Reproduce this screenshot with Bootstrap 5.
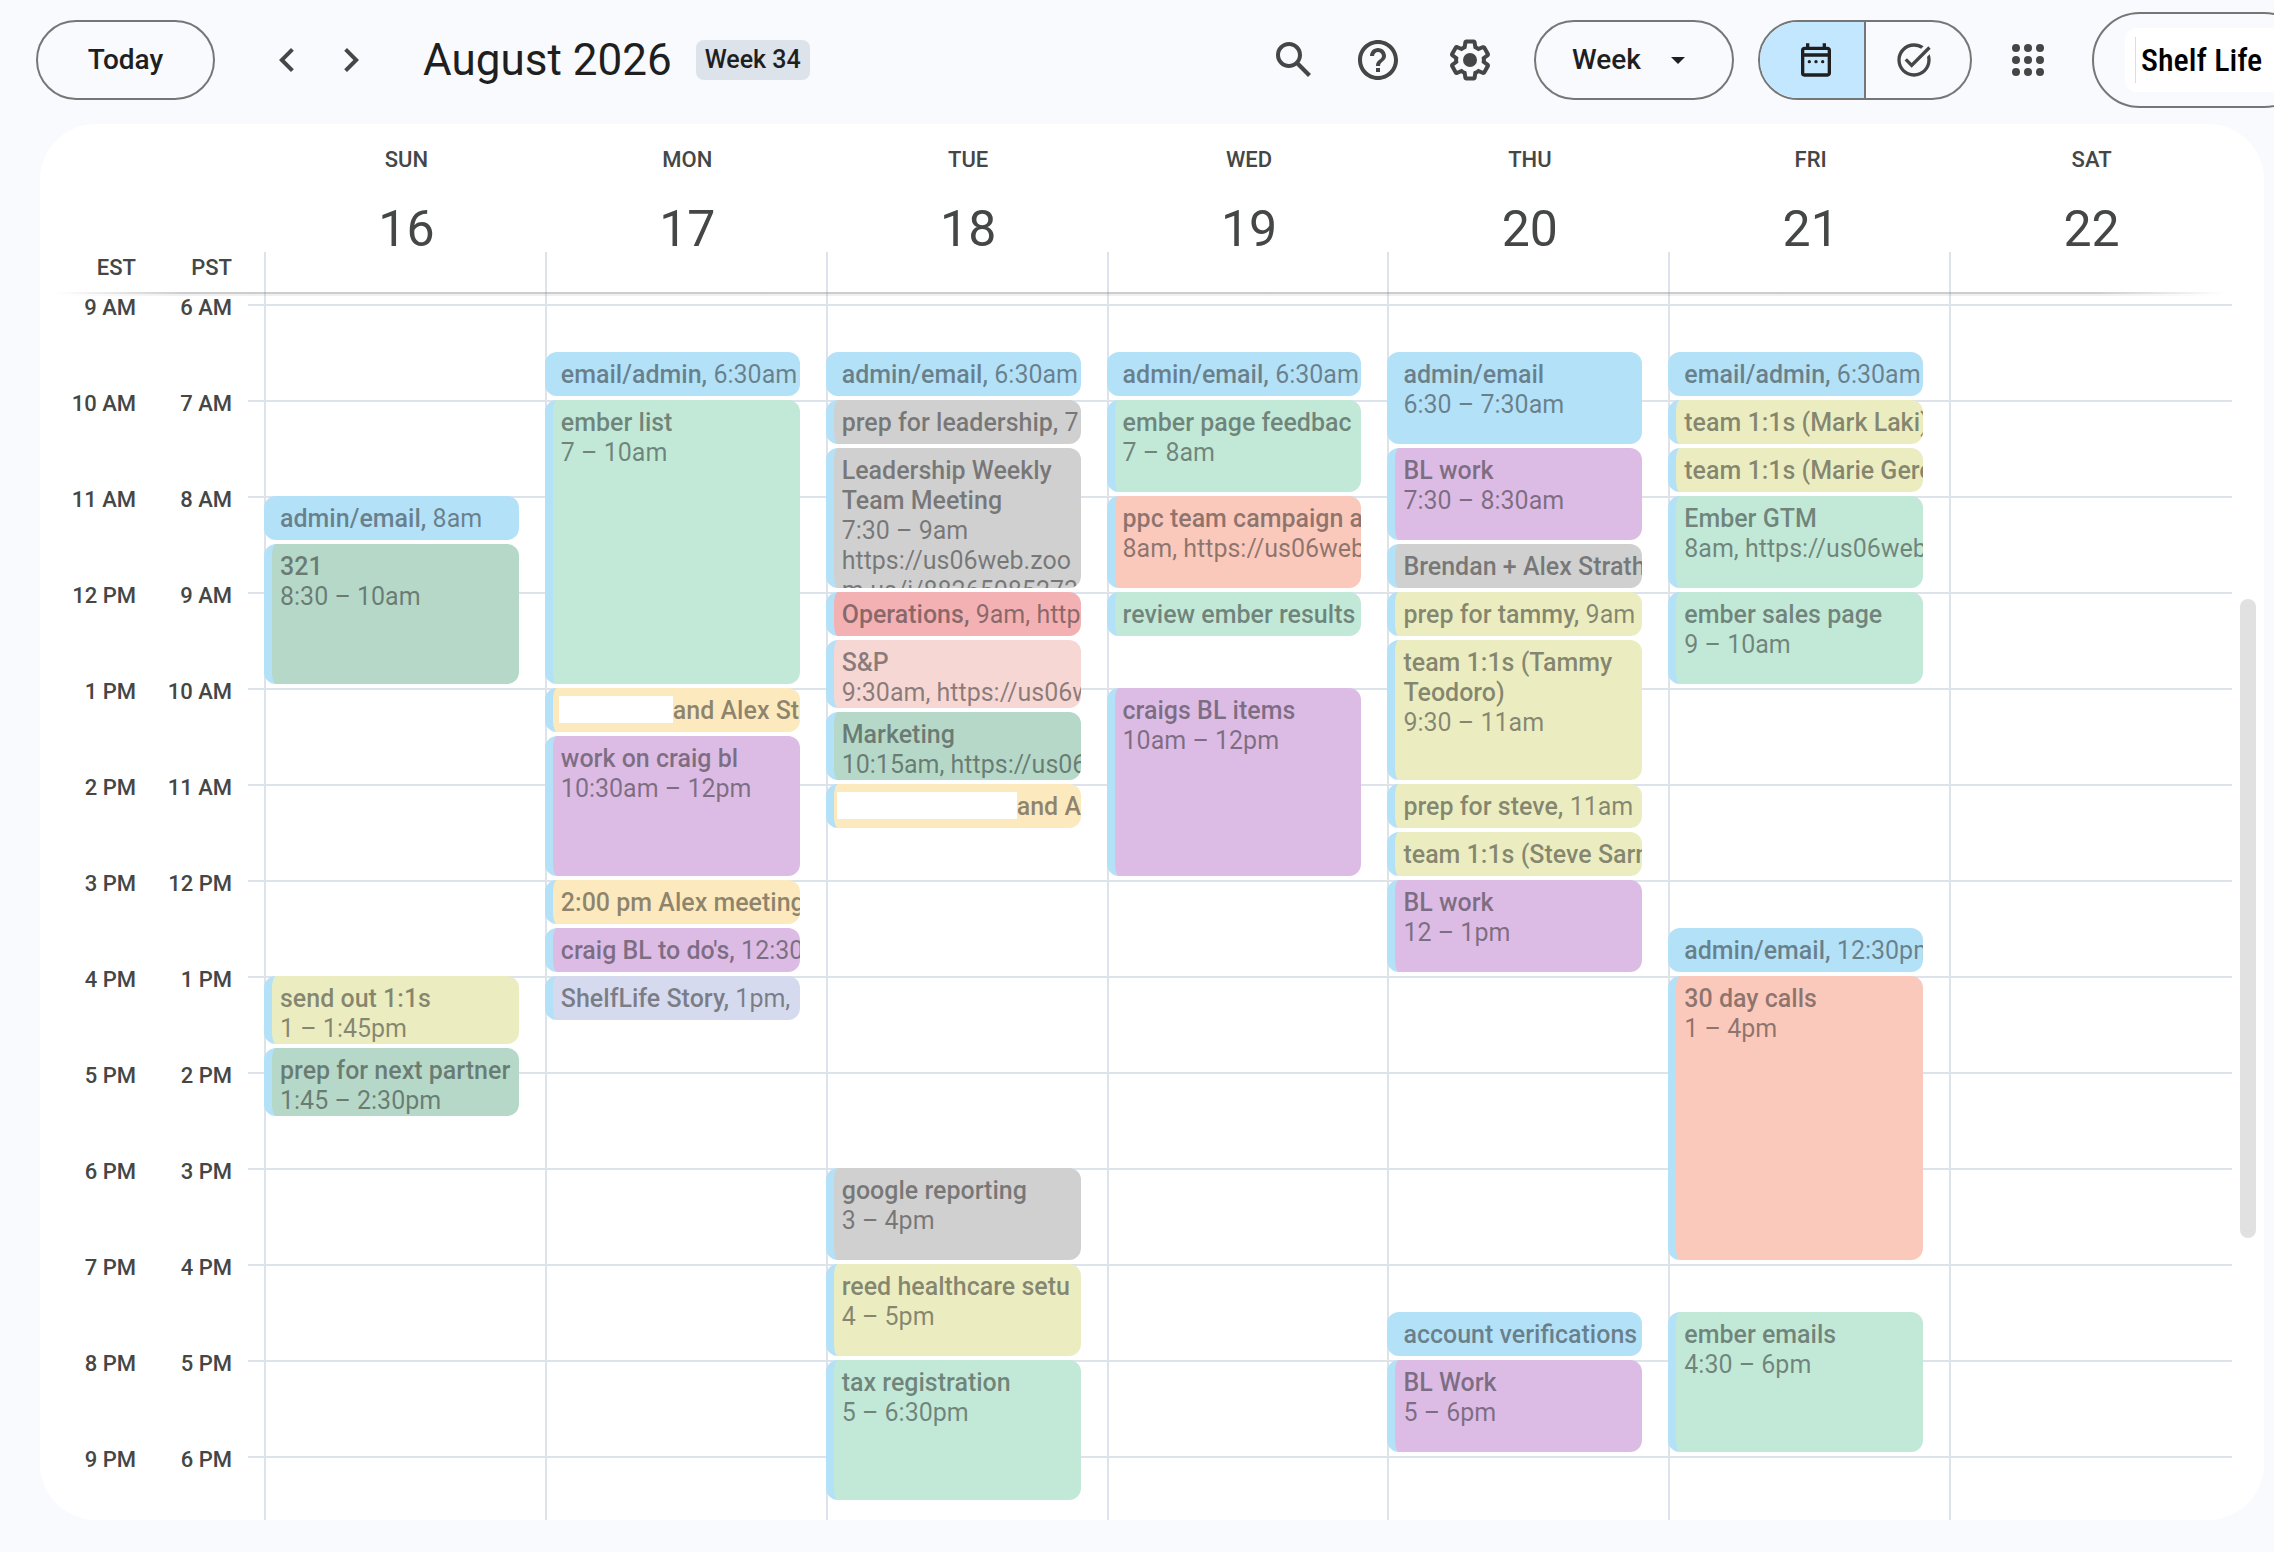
<!DOCTYPE html>
<html lang="en">
<head>
<meta charset="utf-8">
<meta name="viewport" content="width=device-width, initial-scale=1">
<title>Calendar – August 2026</title>
<link href="https://cdn.jsdelivr.net/npm/bootstrap@5.3.0/dist/css/bootstrap.min.css" rel="stylesheet">
<style>
  :root { --line: #dde3ea; --ink: #1f1f1f; --soft: #444746; --edge: #747775; --owner: #b3e1f8; }
  body { background: #f8fafd; color: var(--ink); font-family: Roboto, "Liberation Sans", sans-serif; font-size: 25px; line-height: 30px; }

  /* top bar */
  .topbar { height: 124px; padding: 0 0 4px 36px; }
  .topbar svg { fill: var(--soft); display: block; }
  .pill { height: 80px; border: 2px solid var(--edge); border-radius: 40px; background: transparent; color: var(--ink); font-size: 28px; font-weight: 500; }
  .pill-today { width: 179px; margin-right: 48px; }
  .pill-view { width: 200px; margin: 0 24px 0 40px; }
  .pill-view select { appearance: none; width: 100%; height: 100%; border: 0; border-radius: 40px; background: transparent; padding: 0 36px; font: inherit; color: inherit; }
  .pill-view .caret { position: absolute; right: 47px; top: 35px; pointer-events: none; fill: var(--ink); }
  .tool { border: 0; background: transparent; padding: 0; }
  .tool-help { margin: 0 44px 0 36px; }
  .tool-apps { margin-left: 32px; }
  .month { font-size: 44px; line-height: 56px; font-weight: 400; margin: 0 24px 0 48px; }
  .weekno { background: var(--line); border-radius: 8px; height: 40px; line-height: 40px; padding: 0 9px; font-weight: 500; }
  .pill-mode { width: 214px; overflow: hidden; }
  .pill-mode button { border: 0; background: transparent; flex: 1 1 0; display: flex; align-items: center; justify-content: center; }
  .pill-mode .cal-on { background: #c2e7ff; border-right: 2px solid var(--edge); padding: 0 0 0 8px; }
  .pill-mode .cal-on svg { fill: var(--ink); }
  .pill-mode .task-off { padding: 0 8px 0 0; }
  .account { width: 220px; height: 96px; border: 2px solid var(--edge); border-radius: 48px; margin: 0 -38px 0 40px; padding-left: 31px; }
  .brand { background: #fff; border-radius: 12px; height: 64px; width: 160px; padding-left: 10px; }
  .brand span { border-left: 1px solid #ddd; padding-left: 5px; font: 500 32px/46px "Roboto Condensed", "Liberation Sans", sans-serif; color: #000; }

  /* calendar panel */
  .panel { background: #fff; border-radius: 56px; margin: 0 10px 32px 40px; min-height: 0; overflow: hidden; }
  .panel-head { height: 168px; color: var(--soft); padding-right: 32px; }
  .zones, .hours { width: 208px; flex: none; color: var(--soft); font-size: 22px; font-weight: 500; }
  .zones span, .hours > div { width: 96px; text-align: right; }
  .zones { padding-bottom: 11px; line-height: 26px; }
  .heads, .days { display: grid; grid-template-columns: repeat(7, minmax(0, 1fr)); padding: 0 2px 0 16px; }
  .dayhead { padding: 24px 0 0 4px; text-align: center; background: linear-gradient(var(--line), var(--line)) 0 128px / 2px 100% no-repeat; }
  .dayhead .dow { display: block; font-size: 22px; line-height: 24px; font-weight: 500; margin-bottom: 29px; }
  .dayhead .num { display: block; font-size: 50px; line-height: 56px; font-weight: 400; }
  .scroller { position: relative; min-height: 0; overflow: hidden; }
  .scroller::before { content: ""; position: absolute; left: 16px; right: 40px; top: 0; height: 4px; z-index: 2;
    background: linear-gradient(90deg, #fff0, #8885 6%, #8885 94%, #fff0) 0 0 / 100% 2px no-repeat,
                linear-gradient(90deg, #fff0, #8882 6%, #8882 94%, #fff0) 0 0 / 100% 4px no-repeat; }
  .hours > div { line-height: 32px; }
  .hours span { display: block; height: 96px; }
  .days { background: repeating-linear-gradient(var(--line) 0 2px, #fff0 2px 96px) 0 12px no-repeat; }
  .day { padding: 12px 26px 0 0; display: grid; grid-auto-rows: 24px; grid-template-columns: minmax(0, 1fr); align-content: start;
    background: linear-gradient(var(--line), var(--line)) 0 0 / 2px 100% no-repeat; }
  .track { width: 32px; flex: none; display: grid; grid-template-rows: 25% 52% 23%; }
  .thumb { grid-row: 2; width: 16px; margin-left: 8px; border-radius: 8px; background: #e1e1e1; }

  /* events */
  .ev { margin-bottom: 4px; border: 0; border-left: 8px solid var(--owner); border-radius: 12px; padding: 8px 0 0 8px; overflow: hidden; white-space: nowrap;
    color: #1f1f1f80; min-width: 0; min-height: 0; background: var(--fill); }
  .ev strong { font-weight: 500; }
  .ev.wraps { white-space: normal; }
  .blank { display: inline-block; background: #fff; height: 27px; width: 114px; margin: 0 0 3px -2px; vertical-align: bottom; }
  .blank.long { width: 180px; margin-left: -5px; }
  .sky { --fill: #b3e1f8; } .mint { --fill: #c2e9d7; } .sage { --fill: #b5d8c8; } .ash { --fill: #d0d0d0; }
  .cream { --fill: #fce9bd; } .lime { --fill: #ebedc1; } .coral { --fill: #fbc9bc; } .rose { --fill: #f3b1b4; }
  .blush { --fill: #f6d7d4; } .grape { --fill: #dcbce5; } .lilac { --fill: #d6daee; }
</style>
</head>
<body class="d-flex flex-column vh-100 overflow-hidden">

<header class="topbar d-flex align-items-center flex-shrink-0 overflow-hidden text-nowrap">
  <button type="button" class="pill pill-today flex-shrink-0">Today</button>
  <button type="button" class="tool me-3" aria-label="Previous week"><svg width="48" height="48" viewBox="0 0 24 24"><path d="M15.41 7.41 14 6l-6 6 6 6 1.41-1.41L10.83 12z"/></svg></button>
  <button type="button" class="tool" aria-label="Next week"><svg width="48" height="48" viewBox="0 0 24 24"><path d="M10 6 8.59 7.41 13.17 12l-4.58 4.59L10 18l6-6z"/></svg></button>
  <h1 class="month">August 2026</h1>
  <span class="weekno">Week 34</span>

  <div class="d-flex align-items-center ms-auto flex-shrink-0">
    <button type="button" class="tool" aria-label="Search"><svg width="48" height="48" viewBox="0 0 24 24"><path d="M20.49 19l-5.73-5.73C15.53 12.2 16 10.91 16 9.5A6.5 6.5 0 1 0 9.5 16c1.41 0 2.7-.47 3.77-1.24L19 20.49 20.49 19zM5 9.5C5 7.01 7.01 5 9.5 5S14 7.01 14 9.5 11.99 14 9.5 14 5 11.99 5 9.5z"/></svg></button>
    <button type="button" class="tool tool-help" aria-label="Help"><svg width="48" height="48" viewBox="0 0 24 24"><path d="M11 18h2v-2h-2v2zm1-16C6.48 2 2 6.48 2 12s4.48 10 10 10 10-4.48 10-10S17.52 2 12 2zm0 18c-4.41 0-8-3.59-8-8s3.59-8 8-8 8 3.59 8 8-3.59 8-8 8zm0-14c-2.21 0-4 1.79-4 4h2c0-1.1.9-2 2-2s2 .9 2 2c0 2-3 1.75-3 5h2c0-2.25 3-2.5 3-5 0-2.21-1.79-4-4-4z"/></svg></button>
    <button type="button" class="tool" aria-label="Settings"><svg width="48" height="48" viewBox="0 0 24 24"><path d="M13.85 22.25h-3.7c-.74 0-1.36-.54-1.45-1.27l-.27-1.89c-.27-.14-.53-.29-.79-.46l-1.8.72c-.7.26-1.47-.03-1.81-.65L2.2 15.53c-.35-.66-.2-1.44.36-1.88l1.53-1.19c-.01-.15-.02-.3-.02-.46 0-.15.01-.31.02-.46l-1.52-1.19c-.59-.45-.74-1.26-.37-1.88l1.85-3.19c.34-.62 1.11-.9 1.79-.63l1.81.73c.26-.17.52-.32.78-.46l.27-1.91c.09-.7.71-1.25 1.44-1.25h3.7c.74 0 1.36.54 1.45 1.27l.27 1.89c.27.14.53.29.79.46l1.8-.72c.71-.26 1.48.03 1.82.65l1.84 3.18c.36.66.2 1.44-.36 1.88l-1.52 1.19c.01.15.02.3.02.46s-.01.31-.02.46l1.52 1.19c.56.45.72 1.23.37 1.86l-1.86 3.22c-.34.62-1.11.9-1.8.63l-1.8-.72c-.26.17-.52.32-.78.46l-.27 1.91c-.1.68-.72 1.22-1.46 1.22zm-3.23-2h2.76l.37-2.55.53-.22c.44-.18.88-.44 1.34-.78l.45-.34 2.38.96 1.38-2.4-2.03-1.58.07-.56c.03-.26.06-.51.06-.78s-.03-.53-.06-.78l-.07-.56 2.03-1.58-1.39-2.4-2.39.96-.45-.35c-.42-.32-.87-.58-1.33-.77l-.52-.22-.37-2.55h-2.76l-.37 2.55-.53.21c-.44.19-.88.44-1.34.79l-.45.33-2.38-.95-1.39 2.39 2.03 1.58-.07.56a7 7 0 0 0-.06.79c0 .26.02.53.06.78l.07.56-2.03 1.58 1.38 2.4 2.39-.96.45.35c.43.33.86.58 1.33.77l.53.22.38 2.55z"/><circle cx="12" cy="12" r="3.5"/></svg></button>
    <div class="pill pill-view position-relative">
      <select aria-label="Calendar view"><option>Day</option><option selected>Week</option><option>Month</option></select>
      <svg class="caret" width="14" height="7" viewBox="0 0 14 7"><path d="M0 0h14L7 7z"/></svg>
    </div>
    <div class="pill pill-mode d-flex" role="group" aria-label="Calendar or tasks">
      <button type="button" class="cal-on" aria-label="Calendar" aria-pressed="true"><svg width="40" height="40" viewBox="0 0 24 24"><path d="M19 4h-1V2h-2v2H8V2H6v2H5c-1.11 0-1.99.9-1.99 2L3 20a2 2 0 0 0 2 2h14c1.1 0 2-.9 2-2V6c0-1.1-.9-2-2-2zm0 16H5V10h14v10zm0-12H5V6h14v2z"/><circle cx="8" cy="13" r="1"/><circle cx="12" cy="13" r="1"/><circle cx="16" cy="13" r="1"/></svg></button>
      <button type="button" class="task-off" aria-label="Tasks"><svg width="40" height="40" viewBox="0 0 24 24"><path d="M22 5.18L10.59 16.6l-4.24-4.24 1.41-1.41 2.83 2.83 10-10L22 5.18zm-2.21 5.04c.13.57.21 1.17.21 1.78 0 4.42-3.58 8-8 8s-8-3.58-8-8 3.58-8 8-8c1.58 0 3.04.46 4.28 1.25l1.44-1.44C16.1 2.67 14.13 2 12 2 6.48 2 2 6.48 2 12s4.48 10 10 10 10-4.48 10-10c0-1.19-.22-2.33-.6-3.39l-1.61 1.61z"/></svg></button>
    </div>
    <button type="button" class="tool tool-apps" aria-label="Apps"><svg width="48" height="48" viewBox="0 0 48 48"><circle cx="12" cy="12" r="4"/><circle cx="24" cy="12" r="4"/><circle cx="36" cy="12" r="4"/><circle cx="12" cy="24" r="4"/><circle cx="24" cy="24" r="4"/><circle cx="36" cy="24" r="4"/><circle cx="12" cy="36" r="4"/><circle cx="24" cy="36" r="4"/><circle cx="36" cy="36" r="4"/></svg></button>
    <div class="account d-flex align-items-center"><div class="brand d-flex align-items-center"><span>Shelf Life</span></div></div>
  </div>
</header>

<main class="panel d-flex flex-column flex-grow-1">
  <div class="panel-head d-flex flex-shrink-0">
    <div class="zones d-flex align-items-end"><span>EST</span><span>PST</span></div>
    <div class="heads flex-grow-1">
      <div class="dayhead"><span class="dow">SUN</span><span class="num">16</span></div>
      <div class="dayhead"><span class="dow">MON</span><span class="num">17</span></div>
      <div class="dayhead"><span class="dow">TUE</span><span class="num">18</span></div>
      <div class="dayhead"><span class="dow">WED</span><span class="num">19</span></div>
      <div class="dayhead"><span class="dow">THU</span><span class="num">20</span></div>
      <div class="dayhead"><span class="dow">FRI</span><span class="num">21</span></div>
      <div class="dayhead"><span class="dow">SAT</span><span class="num">22</span></div>
    </div>
  </div>

  <div class="scroller d-flex flex-grow-1">
    <div class="hours d-flex">
      <div><span>9 AM</span><span>10 AM</span><span>11 AM</span><span>12 PM</span><span>1 PM</span><span>2 PM</span><span>3 PM</span><span>4 PM</span><span>5 PM</span><span>6 PM</span><span>7 PM</span><span>8 PM</span><span>9 PM</span></div>
      <div><span>6 AM</span><span>7 AM</span><span>8 AM</span><span>9 AM</span><span>10 AM</span><span>11 AM</span><span>12 PM</span><span>1 PM</span><span>2 PM</span><span>3 PM</span><span>4 PM</span><span>5 PM</span><span>6 PM</span></div>
    </div>

    <!-- each grid row is a quarter of an hour; row 1 is 6:00 AM PST -->
    <div class="days flex-grow-1">
      <div class="day">
        <div class="ev sky" style="grid-row:9/span 2"><strong>admin/email,</strong> 8am</div>
        <div class="ev sage" style="grid-row:11/span 6"><strong>321</strong><br>8:30 – 10am</div>
        <div class="ev lime" style="grid-row:29/span 3"><strong>send out 1:1s</strong><br>1 – 1:45pm</div>
        <div class="ev sage" style="grid-row:32/span 3"><strong>prep for next partner</strong><br>1:45 – 2:30pm</div>
      </div>
      <div class="day">
        <div class="ev sky" style="grid-row:3/span 2"><strong>email/admin,</strong> 6:30am</div>
        <div class="ev mint" style="grid-row:5/span 12"><strong>ember list</strong><br>7 – 10am</div>
        <div class="ev cream" style="grid-row:17/span 2"><span class="blank"></span><strong>and Alex St</strong></div>
        <div class="ev grape" style="grid-row:19/span 6"><strong>work on craig bl</strong><br>10:30am – 12pm</div>
        <div class="ev cream" style="grid-row:25/span 2"><strong>2:00 pm Alex meeting</strong></div>
        <div class="ev grape" style="grid-row:27/span 2"><strong>craig BL to do's,</strong> 12:30</div>
        <div class="ev lilac" style="grid-row:29/span 2"><strong>ShelfLife Story,</strong> 1pm,</div>
      </div>
      <div class="day">
        <div class="ev sky" style="grid-row:3/span 2"><strong>admin/email,</strong> 6:30am</div>
        <div class="ev ash" style="grid-row:5/span 2"><strong>prep for leadership,</strong> 7</div>
        <div class="ev ash wraps" style="grid-row:7/span 6"><strong>Leadership Weekly Team Meeting</strong><br>7:30 – 9am<br>https://us06web.zoo<br>m.us/j/88265085273?</div>
        <div class="ev rose" style="grid-row:13/span 2"><strong>Operations,</strong> 9am, http</div>
        <div class="ev blush" style="grid-row:15/span 3"><strong>S&amp;P</strong><br>9:30am, https://us06w</div>
        <div class="ev sage" style="grid-row:18/span 3"><strong>Marketing</strong><br>10:15am, https://us06w</div>
        <div class="ev cream" style="grid-row:21/span 2"><span class="blank long"></span><strong>and A</strong></div>
        <div class="ev ash" style="grid-row:37/span 4"><strong>google reporting</strong><br>3 – 4pm</div>
        <div class="ev lime" style="grid-row:41/span 4"><strong>reed healthcare setu</strong><br>4 – 5pm</div>
        <div class="ev mint" style="grid-row:45/span 6"><strong>tax registration</strong><br>5 – 6:30pm</div>
      </div>
      <div class="day">
        <div class="ev sky" style="grid-row:3/span 2"><strong>admin/email,</strong> 6:30am</div>
        <div class="ev mint" style="grid-row:5/span 4"><strong>ember page feedbac</strong><br>7 – 8am</div>
        <div class="ev coral" style="grid-row:9/span 4"><strong>ppc team campaign a</strong><br>8am, https://us06web</div>
        <div class="ev mint" style="grid-row:13/span 2"><strong>review ember results</strong></div>
        <div class="ev grape" style="grid-row:17/span 8"><strong>craigs BL items</strong><br>10am – 12pm</div>
      </div>
      <div class="day">
        <div class="ev sky" style="grid-row:3/span 4"><strong>admin/email</strong><br>6:30 – 7:30am</div>
        <div class="ev grape" style="grid-row:7/span 4"><strong>BL work</strong><br>7:30 – 8:30am</div>
        <div class="ev ash" style="grid-row:11/span 2"><strong>Brendan + Alex Strath</strong></div>
        <div class="ev lime" style="grid-row:13/span 2"><strong>prep for tammy,</strong> 9am</div>
        <div class="ev lime wraps" style="grid-row:15/span 6"><strong>team 1:1s (Tammy Teodoro)</strong><br>9:30 – 11am</div>
        <div class="ev lime" style="grid-row:21/span 2"><strong>prep for steve,</strong> 11am</div>
        <div class="ev lime" style="grid-row:23/span 2"><strong>team 1:1s (Steve Sarn</strong></div>
        <div class="ev grape" style="grid-row:25/span 4"><strong>BL work</strong><br>12 – 1pm</div>
        <div class="ev sky" style="grid-row:43/span 2"><strong>account verifications</strong></div>
        <div class="ev grape" style="grid-row:45/span 4"><strong>BL Work</strong><br>5 – 6pm</div>
      </div>
      <div class="day">
        <div class="ev sky" style="grid-row:3/span 2"><strong>email/admin,</strong> 6:30am</div>
        <div class="ev lime" style="grid-row:5/span 2"><strong>team 1:1s (Mark Laki)</strong></div>
        <div class="ev lime" style="grid-row:7/span 2"><strong>team 1:1s (Marie Gero</strong></div>
        <div class="ev mint" style="grid-row:9/span 4"><strong>Ember GTM</strong><br>8am, https://us06web</div>
        <div class="ev mint" style="grid-row:13/span 4"><strong>ember sales page</strong><br>9 – 10am</div>
        <div class="ev sky" style="grid-row:27/span 2"><strong>admin/email,</strong> 12:30pm</div>
        <div class="ev coral" style="grid-row:29/span 12"><strong>30 day calls</strong><br>1 – 4pm</div>
        <div class="ev mint" style="grid-row:43/span 6"><strong>ember emails</strong><br>4:30 – 6pm</div>
      </div>
      <div class="day"></div>
    </div>
    <div class="track"><div class="thumb"></div></div>
  </div>
</main>

<script src="https://cdn.jsdelivr.net/npm/bootstrap@5.3.0/dist/js/bootstrap.bundle.min.js"></script>
</body>
</html>
